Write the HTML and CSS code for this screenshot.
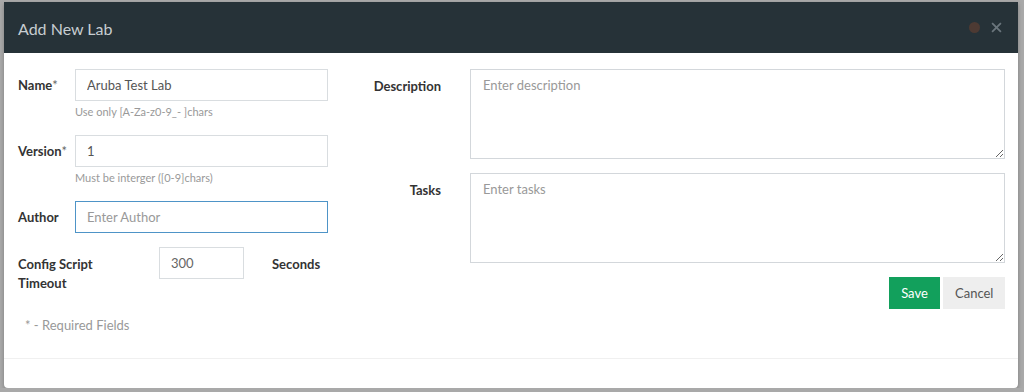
FILE: index.html
```html
<!DOCTYPE html>
<html lang="en">
<head>
    <meta charset="UTF-8">
    <title>Add New Lab</title>
    <link rel="stylesheet" href="styles.css">
</head>
<body>

<div class="modal">
    <div class="modal-header">
        <h4>Add New Lab</h4>
        <span class="status-dot"></span>
        <button class="close" type="button">
            <svg width="11" height="11" viewBox="0 0 10 10"><path d="M1 1L9 9M9 1L1 9" stroke="#6b767d" stroke-width="1.6"/></svg>
        </button>
    </div>

    <div class="modal-body">
        <div class="col-left">
            <div class="field">
                <label class="lbl">Name<span class="req">*</span></label>
                <div class="ctrl">
                    <input type="text" class="input" value="Aruba Test Lab">
                    <p class="help">Use only [A-Za-z0-9_- ]chars</p>
                </div>
            </div>
            <div class="field">
                <label class="lbl">Version<span class="req">*</span></label>
                <div class="ctrl">
                    <input type="text" class="input" value="1">
                    <p class="help">Must be interger ([0-9]chars)</p>
                </div>
            </div>
            <div class="field">
                <label class="lbl">Author</label>
                <div class="ctrl">
                    <input type="text" class="input focus" placeholder="Enter Author">
                </div>
            </div>
            <div class="field timeout">
                <label class="lbl wide">Config Script Timeout</label>
                <input type="text" class="input small" value="300">
                <span class="lbl unit">Seconds</span>
            </div>
            <p class="required">* - Required Fields</p>
        </div>

        <div class="col-right">
            <div class="field">
                <label class="lbl right">Description</label>
                <textarea class="area" placeholder="Enter description"></textarea>
            </div>
            <div class="field">
                <label class="lbl right">Tasks</label>
                <textarea class="area" placeholder="Enter tasks"></textarea>
            </div>
            <div class="actions">
                <button class="btn save" type="button">Save</button>
                <button class="btn cancel" type="button">Cancel</button>
            </div>
        </div>
    </div>

    <div class="modal-footer"></div>
</div>

</body>
</html>
```

FILE: styles.css
```css
body { margin: 0; background: #a9a9a9; font-family: Lato, "Open Sans", sans-serif; font-size: 13px; color: #333; }
.modal { margin: 2px 6px 0 4px; height: 386px; background: #fff; border-radius: 0 0 4px 4px; box-shadow: 0 2px 4px rgba(0,0,0,0.25); display: flex; flex-direction: column; }
.modal-header { height: 51px; background: #263238; display: flex; align-items: center; padding: 0 14px; }
.modal-header h4 { margin: 0; flex: 1; font-size: 16px; font-weight: normal; color: #c7cdd1; position: relative; top: 1px; }
.status-dot { width: 11px; height: 11px; border-radius: 50%; background: #4d3a33; margin-right: 11px; }
.close { background: none; border: none; padding: 0; margin-right: 2px; display: flex; }

.modal-body { display: flex; padding: 16px 13px 0 14px; height: 289px; border-bottom: 1px solid #f0f0f0; }
.col-left { width: 340px; }
.col-right { flex: 1; margin-left: -1px; }

.field { display: flex; align-items: flex-start; margin-bottom: 14px; }
.lbl { width: 57px; font-weight: bold; line-height: 19px; padding-top: 7px; flex: none; }
.req { font-weight: normal; color: #666; }
.ctrl { width: 253px; }
.input { box-sizing: border-box; width: 253px; height: 32px; border: 1px solid #d9dde0; padding: 0 11px; font: 13px Lato, sans-serif; color: #555; outline: none; display: block; }
.input.focus { border-color: #4e94c7; }
.input::placeholder, .area::placeholder { color: #999; }
.help { margin: 4px 0 0; font-size: 11px; color: #999; line-height: 14px; height: 16px; }

.timeout .lbl.wide { width: 100px; padding-top: 8px; padding-right: 41px; }
.input.small { width: 85px; color: #666; }
.lbl.unit { width: auto; padding-left: 28px; padding-top: 8px; }
.required { margin: 24px 0 0 7px; color: #999; }

.lbl.right { width: 84px; text-align: right; padding-right: 29px; padding-top: 8px; }
.area { box-sizing: border-box; flex: 1; height: 90px; border: 1px solid #d3d7db; padding: 7px 12px; font: 13px Lato, sans-serif; color: #555; outline: none; resize: vertical; }
.col-right .field { margin-bottom: 14px; }
.actions { display: flex; justify-content: flex-end; gap: 3px; margin-top: 1px; }
.btn { height: 32px; border: none; font: 13px Lato, sans-serif; padding: 0 12px; }
.btn.save { background: #12a05c; color: #fff; width: 51px; }
.btn.cancel { background: #eeeeee; color: #555; width: 62px; }
.modal-footer { flex: 1; }
```
